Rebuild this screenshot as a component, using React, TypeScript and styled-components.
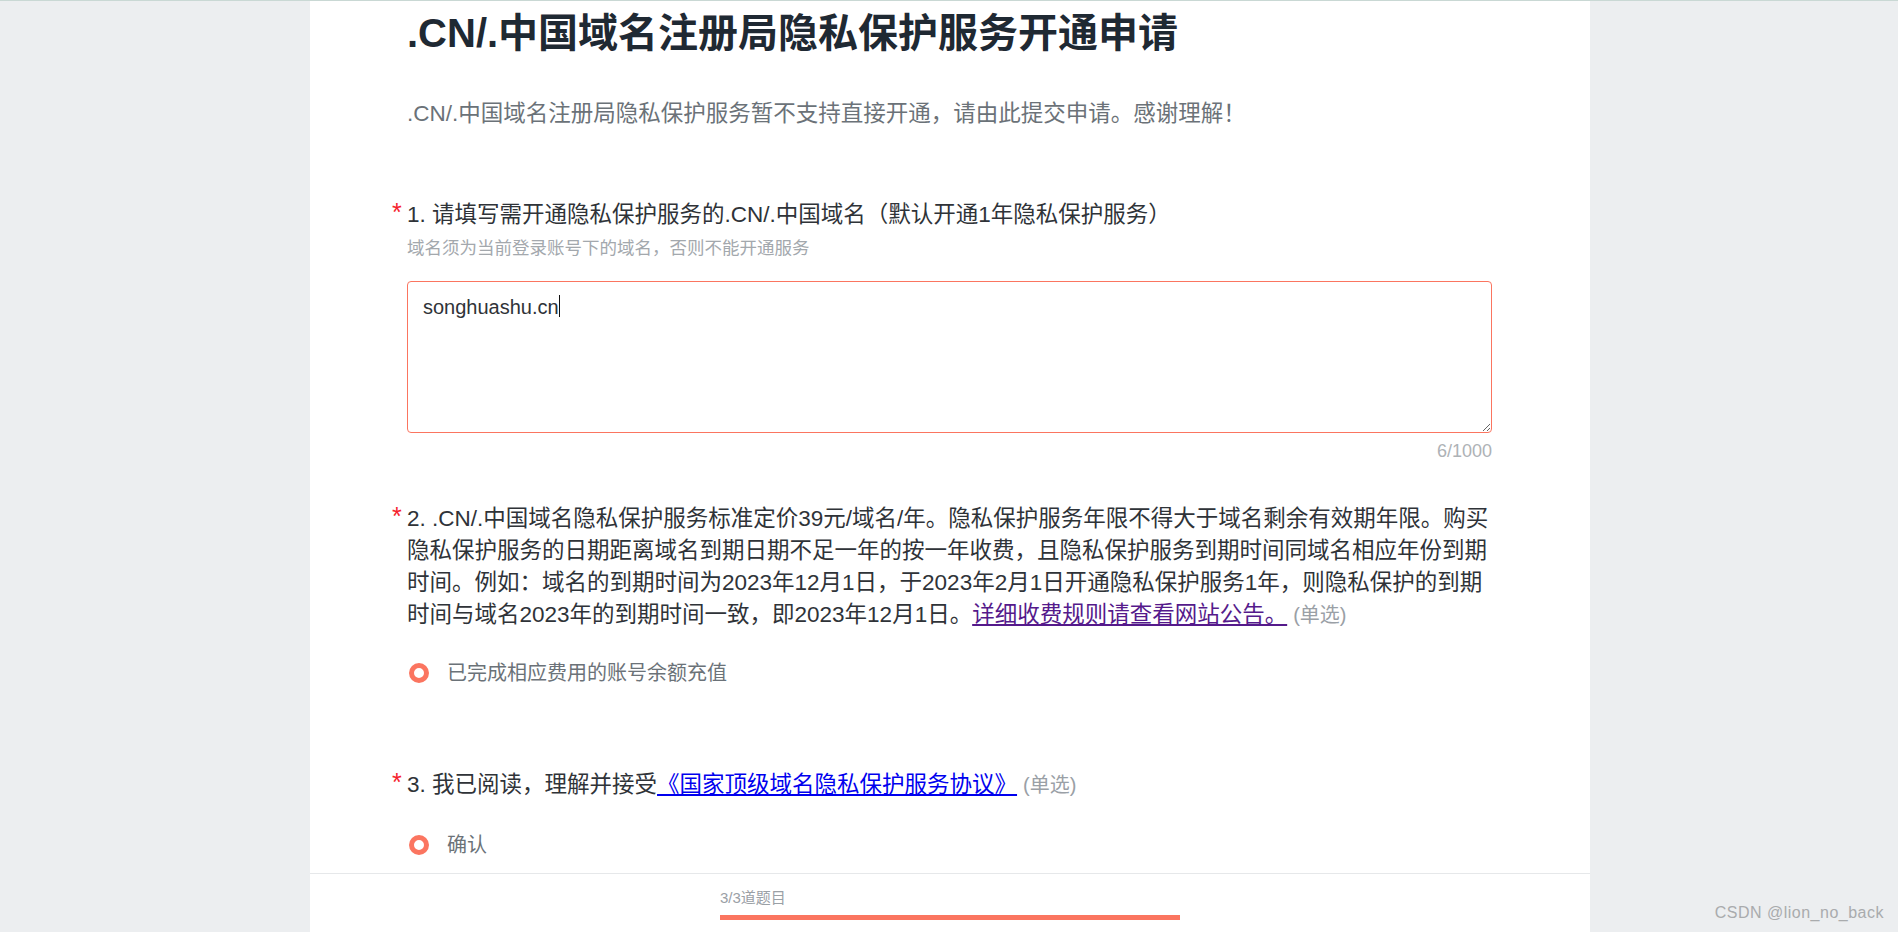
import { FC } from 'react';
import styled, { createGlobalStyle } from 'styled-components';

const Global = createGlobalStyle`
	html, body {
		margin: 0;
		height: 100%;
		overflow: hidden;
		background: #eceef0;
	}
	body {
		font-family: 'Liberation Sans', 'Noto Sans CJK SC', sans-serif;
	}
	* {
		box-sizing: border-box;
	}
`;

const Page = styled.div`
	position: relative;
	height: 932px;
	padding-left: 2px;
	border-top: 1px solid #c9d8d4;
	display: flex;
	justify-content: center;
`;

const Card = styled.main`
	width: 1280px;
	height: 100%;
	background: #fff;
	display: flex;
	flex-direction: column;
`;

const Scroll = styled.div`
	flex: 1;
	min-height: 0;
	overflow: hidden;
	padding: 0 98px 0 97px;
`;

const Title = styled.h1`
	margin: 8px 0 0;
	font-size: 40px;
	line-height: 48px;
	font-weight: 700;
	color: #1f2933;
`;

const Intro = styled.p`
	margin: 41px 0 0;
	font-size: 22.5px;
	line-height: 32px;
	color: #6b7278;
`;

const Question = styled.section<{ $top: number }>`
	margin-top: ${(p) => p.$top}px;
`;

const Label = styled.div`
	position: relative;
	font-size: 22.5px;
	line-height: 32px;
	color: #2f3338;
`;

const Star = styled.span`
	position: absolute;
	left: -15px;
	top: -3px;
	color: #f5222d;
	font-size: 25px;
`;

const Kind = styled.span`
	color: #9aa0a6;
	font-size: 20px;
	margin-left: 6px;
`;

const Visited = styled.a`
	color: #551a8b;
	text-decoration: underline;
`;

const Fresh = styled.a`
	color: #0000ee;
	text-decoration: underline;
`;

const Hint = styled.div`
	font-size: 17.5px;
	line-height: 26px;
	color: #a3a8ad;
	margin-top: 4px;
`;

const AreaWrap = styled.div`
	position: relative;
	margin-top: 20px;
	height: 152px;
`;

const Area = styled.textarea`
	display: block;
	width: 100%;
	height: 152px;
	padding: 12px 15px;
	border: 1px solid #fb7560;
	border-radius: 4px;
	outline: none;
	resize: vertical;
	font-family: 'Liberation Sans', 'Noto Sans CJK SC', sans-serif;
	font-size: 20px;
	line-height: 26px;
	color: #2f3338;
`;

const Caret = styled.span`
	position: absolute;
	left: 152px;
	top: 14px;
	width: 1px;
	height: 22px;
	background: #111;
`;

const Count = styled.div`
	margin-top: 7px;
	text-align: right;
	font-size: 18px;
	line-height: 22px;
	color: #aeb2b6;
`;

const Option = styled.label<{ $top: number }>`
	display: flex;
	align-items: center;
	gap: 18px;
	margin: ${(p) => p.$top}px 0 0 2px;
	font-size: 20px;
	line-height: 28px;
	color: #6b7278;
`;

const Radio = styled.span`
	width: 20px;
	height: 20px;
	border-radius: 50%;
	border: 5px solid #fb7560;
	background: #fff;
	flex: none;
`;

const Footer = styled.footer`
	height: 59px;
	flex: none;
	border-top: 1px solid #e6e8ea;
	background: #fff;
	display: flex;
	justify-content: center;
`;

const Progress = styled.div`
	width: 460px;
	padding-top: 14px;
`;

const ProgressText = styled.div`
	font-size: 15px;
	line-height: 20px;
	color: #9aa0a6;
`;

const Bar = styled.div`
	height: 5px;
	margin-top: 7px;
	background: #fb7560;
`;

const Watermark = styled.div`
	position: absolute;
	right: 14px;
	bottom: 9px;
	font-size: 16px;
	line-height: 20px;
	letter-spacing: 0.5px;
	color: #a9abad;
`;

const App: FC = () => {
	return (
		<Page>
			<Global />
			<Card>
				<Scroll>
					<Title>.CN/.中国域名注册局隐私保护服务开通申请</Title>
					<Intro>.CN/.中国域名注册局隐私保护服务暂不支持直接开通，请由此提交申请。感谢理解！</Intro>
					<Question $top={69}>
						<Label>
							<Star>*</Star>1. 请填写需开通隐私保护服务的.CN/.中国域名（默认开通1年隐私保护服务）
						</Label>
						<Hint>域名须为当前登录账号下的域名，否则不能开通服务</Hint>
						<AreaWrap>
							<Area readOnly value="songhuashu.cn" />
							<Caret />
						</AreaWrap>
						<Count>6/1000</Count>
					</Question>
					<Question $top={41}>
						<Label>
							<Star>*</Star>2. .CN/.中国域名隐私保护服务标准定价39元/域名/年。隐私保护服务年限不得大于域名剩余有效期年限。购买隐私保护服务的日期距离域名到期日期不足一年的按一年收费，且隐私保护服务到期时间同域名相应年份到期时间。例如：域名的到期时间为2023年12月1日，于2023年2月1日开通隐私保护服务1年，则隐私保护的到期时间与域名2023年的到期时间一致，即2023年12月1日。
							<Visited href="#rules">详细收费规则请查看网站公告。</Visited>
							<Kind>(单选)</Kind>
						</Label>
						<Option $top={28}>
							<Radio />
							已完成相应费用的账号余额充值
						</Option>
					</Question>
					<Question $top={82}>
						<Label>
							<Star>*</Star>3. 我已阅读，理解并接受
							<Fresh href="#terms">《国家顶级域名隐私保护服务协议》</Fresh>
							<Kind>(单选)</Kind>
						</Label>
						<Option $top={30}>
							<Radio />
							确认
						</Option>
					</Question>
				</Scroll>
				<Footer>
					<Progress>
						<ProgressText>3/3道题目</ProgressText>
						<Bar />
					</Progress>
				</Footer>
			</Card>
			<Watermark>CSDN @lion_no_back</Watermark>
		</Page>
	);
};

export default App;
